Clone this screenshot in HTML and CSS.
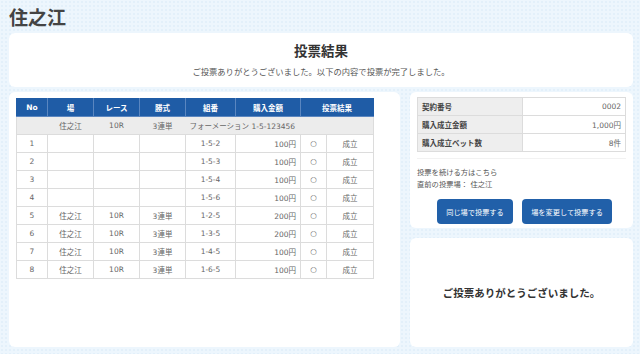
FILE: index.html
```html
<!DOCTYPE html>
<html lang="ja">
<head>
  <meta charset="UTF-8">
  <meta name="viewport" content="width=device-width, initial-scale=1.0">
  <title>投票結果</title>
  <link rel="stylesheet" href="styles.css">
</head>
<body>
  <div class="page">
    <h1 class="place-title">住之江</h1>

    <section class="card result-head">
      <h2>投票結果</h2>
      <p>ご投票ありがとうございました。以下の内容で投票が完了しました。</p>
    </section>

    <div class="main">
      <section class="card bet-list">
        <table class="bet-table">
          <colgroup>
            <col style="width:31px"><col style="width:46px"><col style="width:46px"><col style="width:46px">
            <col style="width:50px"><col style="width:65px"><col style="width:26px"><col style="width:47px">
          </colgroup>
          <thead>
            <tr>
              <th>No</th>
              <th>場</th>
              <th>レース</th>
              <th>勝式</th>
              <th>組番</th>
              <th>購入金額</th>
              <th colspan="2">投票結果</th>
            </tr>
          </thead>
          <tbody>
            <tr class="group-row">
              <td></td>
              <td>住之江</td>
              <td>10R</td>
              <td>3連単</td>
              <td colspan="4" class="left">フォーメーション 1-5-123456</td>
            </tr>
            <tr><td>1</td><td></td><td></td><td></td><td>1-5-2</td><td class="right">100円</td><td>○</td><td>成立</td></tr>
            <tr><td>2</td><td></td><td></td><td></td><td>1-5-3</td><td class="right">100円</td><td>○</td><td>成立</td></tr>
            <tr><td>3</td><td></td><td></td><td></td><td>1-5-4</td><td class="right">100円</td><td>○</td><td>成立</td></tr>
            <tr><td>4</td><td></td><td></td><td></td><td>1-5-6</td><td class="right">100円</td><td>○</td><td>成立</td></tr>
            <tr><td>5</td><td>住之江</td><td>10R</td><td>3連単</td><td>1-2-5</td><td class="right">200円</td><td>○</td><td>成立</td></tr>
            <tr><td>6</td><td>住之江</td><td>10R</td><td>3連単</td><td>1-3-5</td><td class="right">200円</td><td>○</td><td>成立</td></tr>
            <tr><td>7</td><td>住之江</td><td>10R</td><td>3連単</td><td>1-4-5</td><td class="right">100円</td><td>○</td><td>成立</td></tr>
            <tr><td>8</td><td>住之江</td><td>10R</td><td>3連単</td><td>1-6-5</td><td class="right">100円</td><td>○</td><td>成立</td></tr>
          </tbody>
        </table>
      </section>

      <div class="side">
        <section class="card summary">
          <table class="info-table">
            <tr><th>契約番号</th><td>0002</td></tr>
            <tr><th>購入成立金額</th><td>1,000円</td></tr>
            <tr><th>購入成立ベット数</th><td>8件</td></tr>
          </table>
          <div class="continue">
            <p>投票を続ける方はこちら</p>
            <p>直前の投票場： 住之江</p>
          </div>
          <div class="actions">
            <button type="button" class="btn btn-same">同じ場で投票する</button>
            <button type="button" class="btn btn-change">場を変更して投票する</button>
          </div>
        </section>

        <section class="card thanks">
          <p>ご投票ありがとうございました。</p>
        </section>
      </div>
    </div>
  </div>
</body>
</html>
```

FILE: styles.css
```css
html, body {
  margin: 0;
  height: 100%;
}
body {
  font-family: "DejaVu Sans", "Noto Sans CJK JP", sans-serif;
  color: #666;
  background-color: #edf6fd;
  background-image: radial-gradient(#e3f0fa 0.8px, transparent 0.9px);
  background-size: 4px 4px;
}
.page {
  padding: 4px 7px 0 9px;
}
.place-title {
  margin: 0 0 3px;
  font-size: 19px;
  line-height: 26px;
  font-weight: bold;
  color: #444;
  font-family: "Noto Sans CJK JP", sans-serif;
}
.card {
  background: #fff;
  border-radius: 6px;
  box-sizing: border-box;
}
.result-head {
  height: 54px;
  padding: 7px 8px 0;
  text-align: center;
}
.result-head h2 {
  margin: 0;
  font-size: 13.5px;
  line-height: 20px;
  color: #333;
  font-family: "Noto Sans CJK JP", sans-serif;
}
.result-head p {
  margin: 5px 0 0;
  font-size: 8.3px;
  line-height: 14px;
  color: #555;
}
.main {
  display: grid;
  grid-template-columns: 391px 223px;
  gap: 10px;
  margin-top: 5px;
}
.bet-list {
  height: 255px;
  padding: 6px 7px;
}
.bet-table {
  width: 358px;
  table-layout: fixed;
  border-collapse: collapse;
  font-size: 7.5px;
}
.bet-table th, .bet-table td {
  height: 18px;
  padding: 0 4px;
  box-sizing: border-box;
  border: 1px solid #dcdcdc;
  text-align: center;
  white-space: nowrap;
}
.bet-table th {
  background: #1f5ca6;
  color: #fff;
  font-weight: bold;
  border-color: #5a86c0;
  border-top-color: #1f5ca6;
}
.bet-table th:first-child { border-left-color: #1f5ca6; }
.bet-table th:last-child { border-right-color: #1f5ca6; }
.bet-table .group-row td {
  background: #ececec;
  border-left: none;
  border-right: none;
}
.bet-table .group-row td:first-child { border-left: 1px solid #dcdcdc; }
.bet-table .group-row td:last-child { border-right: 1px solid #dcdcdc; }
.bet-table td.left { text-align: left; }
.bet-table td.right { text-align: right; }
.side {
  display: flex;
  flex-direction: column;
  gap: 10px;
}
.summary {
  height: 136px;
  padding: 5px 7px;
}
.info-table {
  width: 209px;
  border-collapse: collapse;
  font-size: 7.5px;
}
.info-table th, .info-table td {
  height: 18px;
  padding: 0 4px;
  border: 1px solid #dcdcdc;
  box-sizing: border-box;
}
.info-table th {
  width: 105px;
  background: #eeeeee;
  text-align: left;
  color: #444;
}
.info-table td {
  text-align: right;
}
.continue {
  margin-top: 6px;
  padding-top: 8px;
  border-top: 1px solid #f2f2f2;
}
.continue p {
  margin: 0;
  font-size: 7.3px;
  line-height: 12px;
  color: #555;
}
.actions {
  display: flex;
  justify-content: center;
  gap: 9px;
  margin-top: 8px;
  padding-left: 6px;
}
.btn {
  height: 25px;
  border: none;
  border-radius: 4px;
  background: #2160a9;
  color: #fff;
  font-family: inherit;
  font-size: 7.2px;
  padding: 0;
}
.btn-same { width: 76px; }
.btn-change { width: 90px; }
.thanks {
  height: 109px;
  display: flex;
  align-items: center;
  justify-content: center;
}
.thanks p {
  margin: 0;
  font-size: 10.5px;
  font-weight: bold;
  color: #333;
}
```
